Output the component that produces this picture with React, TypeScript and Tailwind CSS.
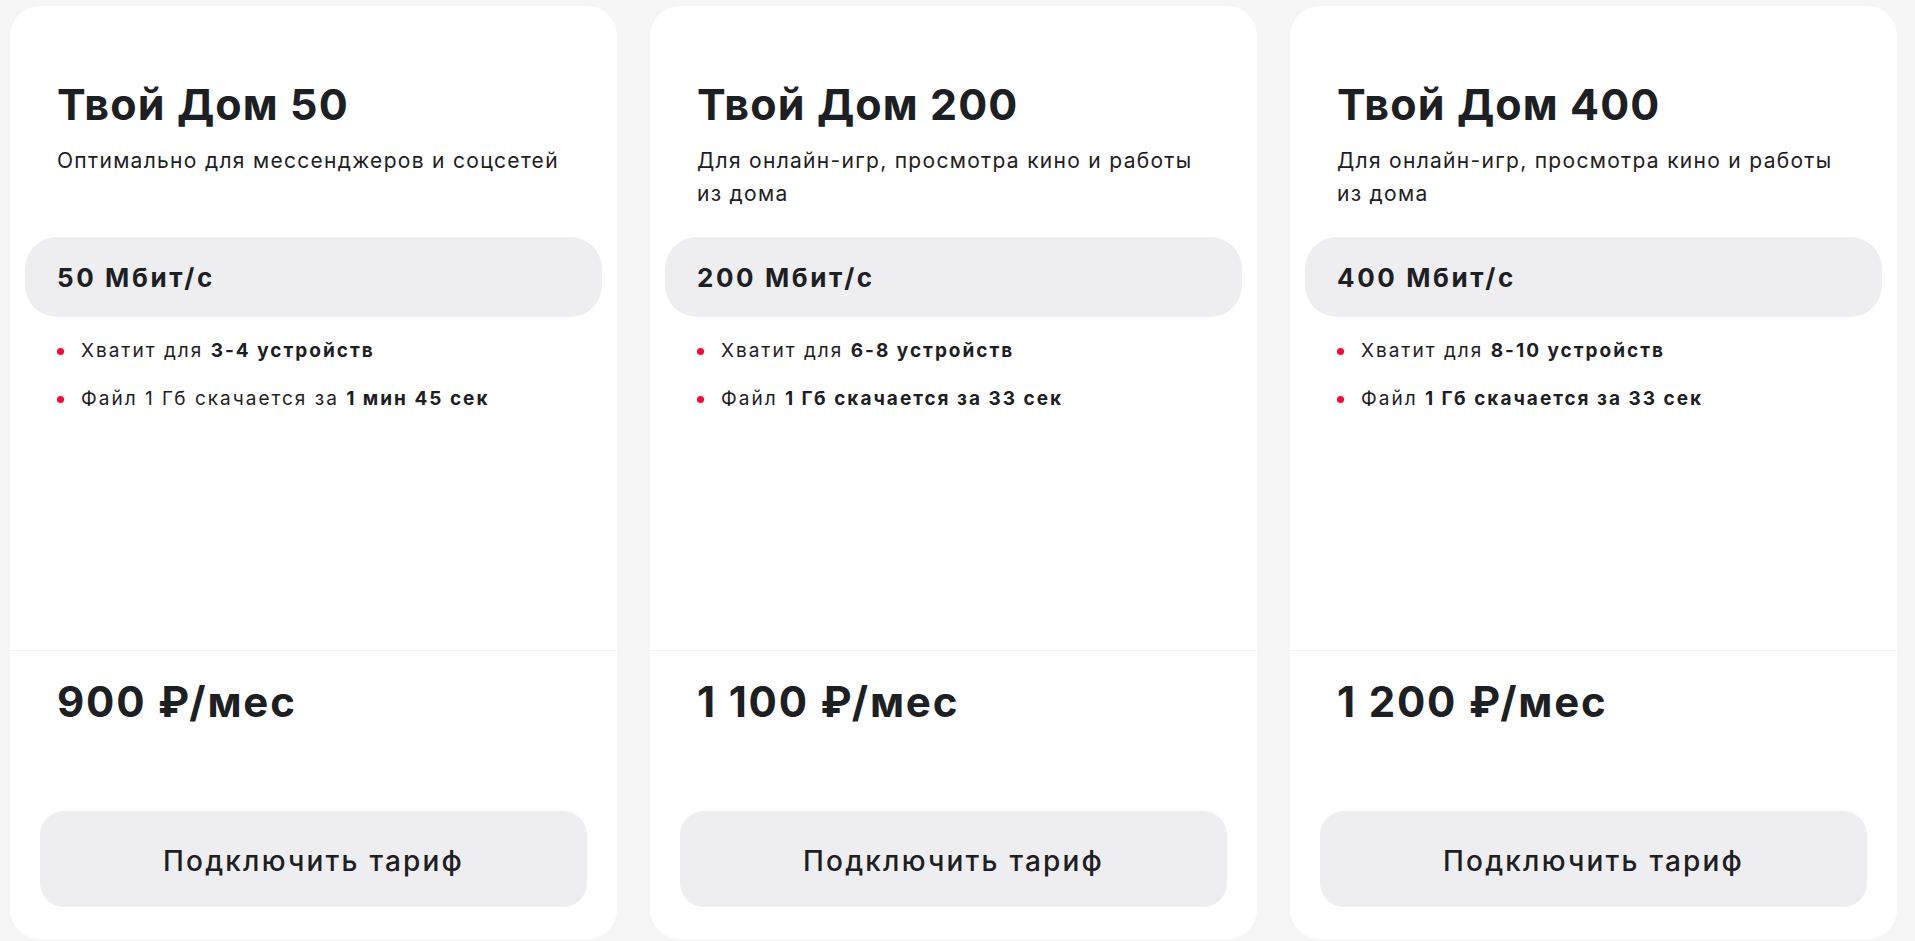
import React from "react";

type Plan = {
  title: string;
  desc: string;
  speed: string;
  devices: string;
  filePrefix: string;
  fileBold: string;
  price: string;
};

const plans: Plan[] = [
  {
    title: "Твой Дом 50",
    desc: "Оптимально для мессенджеров и соцсетей",
    speed: "50 Мбит/с",
    devices: "3-4 устройств",
    filePrefix: "Файл 1 Гб скачается за ",
    fileBold: "1 мин 45 сек",
    price: "900 ₽/мес",
  },
  {
    title: "Твой Дом 200",
    desc: "Для онлайн-игр, просмотра кино и работы из дома",
    speed: "200 Мбит/с",
    devices: "6-8 устройств",
    filePrefix: "Файл ",
    fileBold: "1 Гб скачается за 33 сек",
    price: "1 100 ₽/мес",
  },
  {
    title: "Твой Дом 400",
    desc: "Для онлайн-игр, просмотра кино и работы из дома",
    speed: "400 Мбит/с",
    devices: "8-10 устройств",
    filePrefix: "Файл ",
    fileBold: "1 Гб скачается за 33 сек",
    price: "1 200 ₽/мес",
  },
];

function Card({ p }: { p: Plan }) {
  return (
    <div className="flex h-[933px] w-[607px] shrink-0 flex-col rounded-[30px] bg-white">
      <div className="flex h-[645px] flex-col border-b border-[#f2f2f2]">
        <div className="px-[47px] pt-[72px]">
          <h2 className="text-[43px] font-bold leading-[52px] tracking-[1.1px] text-[#1d2023]">
            {p.title}
          </h2>
          <p className="mt-[14px] h-[66px] max-w-[510px] text-[21px] leading-[33px] tracking-[1.3px] text-[#1d2023]">
            {p.desc}
          </p>
        </div>
        <div className="mx-[15px] mt-[27px] flex h-[80px] items-center rounded-[32px] bg-[#eeeef0] px-[32px]">
          <span className="text-[26px] font-bold tracking-[2.6px] text-[#1d2023]">{p.speed}</span>
        </div>
        <ul className="mt-[18px] flex flex-col gap-[16px] pl-[47px] pr-[30px] text-[19px] leading-[32px] tracking-[2px] text-[#1d2023]">
          <li className="flex items-center gap-[17px]">
            <span className="h-[7px] w-[7px] shrink-0 rounded-full bg-[#ff0032]" />
            <span>
              Хватит для <b className="font-bold">{p.devices}</b>
            </span>
          </li>
          <li className="flex items-center gap-[17px]">
            <span className="h-[7px] w-[7px] shrink-0 rounded-full bg-[#ff0032]" />
            <span>
              {p.filePrefix}
              <b className="font-bold">{p.fileBold}</b>
            </span>
          </li>
        </ul>
      </div>
      <div className="flex flex-1 flex-col px-[30px] pb-[32px]">
        <div className="px-[17px] pt-[23px] text-[42px] font-bold leading-[56px] tracking-[1.8px] text-[#1d2023]">
          {p.price}
        </div>
        <div className="flex-1" />
        <button className="flex h-[96px] w-full items-center justify-center rounded-[24px] bg-[#eeeef0] pt-[4px] text-[28px] font-medium tracking-[2.2px] text-[#1d2023]">
          Подключить тариф
        </button>
      </div>
    </div>
  );
}

export default function App() {
  return (
    <div
      className="flex h-[941px] w-[1915px] gap-[33px] overflow-hidden bg-[#f5f5f5] pl-[10px] pt-[6px]"
      style={{ fontFamily: "Inter, 'Noto Sans', sans-serif" }}
    >
      {plans.map((p) => (
        <Card key={p.title} p={p} />
      ))}
    </div>
  );
}
